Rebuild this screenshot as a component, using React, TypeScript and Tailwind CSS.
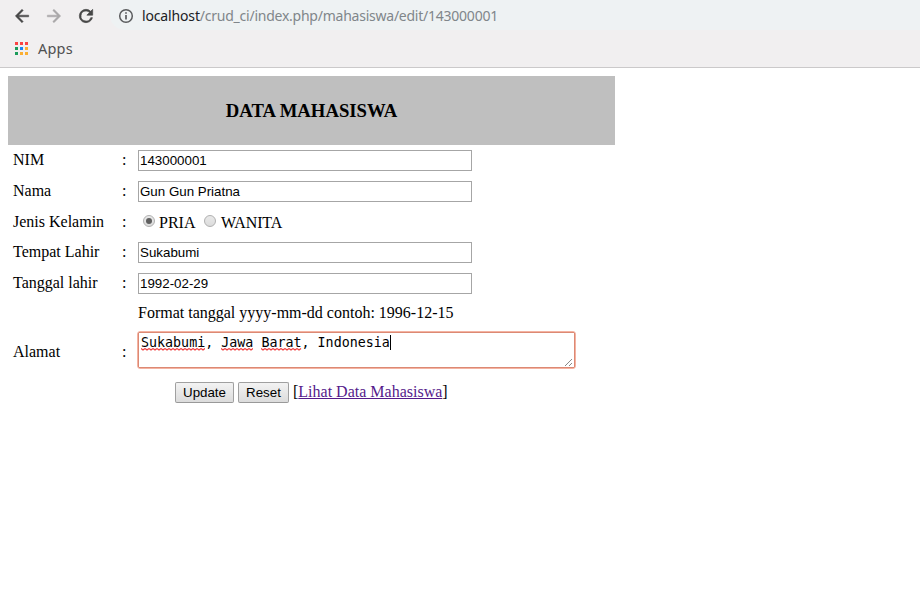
import React from "react";

const serif = "font-['Liberation_Serif',serif]";

function Row({ label, height, shift = "", children }: { label?: string; height: string; shift?: string; children: React.ReactNode }) {
  return (
    <div className={`flex items-center ${height}`}>
      <div className={`w-[109px] pl-[5px] leading-[18px] ${shift}`}>{label}</div>
      <div className={`w-[21px] pl-[5px] leading-[18px] ${shift}`}>{label ? ":" : ""}</div>
      {children}
    </div>
  );
}

function TextField({ value }: { value: string }) {
  return (
    <div className="h-[21px] w-[334px] border border-[#a6a6a6] bg-white pl-px pt-[2px] font-['Liberation_Sans',sans-serif] text-[13.333px] leading-[16px]">
      {value}
    </div>
  );
}

function Radio({ checked }: { checked?: boolean }) {
  return (
    <span className="-mt-[2px] flex h-3 w-3 items-center justify-center rounded-full border border-[#b0b0b0] bg-linear-to-b from-[#e9e9e9] to-[#dcdcdc]">
      {checked && <span className="h-1.5 w-1.5 rounded-full bg-[#5f5f5f]" />}
    </span>
  );
}

function Button({ children, width }: { children: string; width: string }) {
  return (
    <div className={`h-[21px] ${width} rounded-[2px] border border-[#a0a0a0] border-b-[#999] bg-linear-to-b from-[#f3f3f3] to-[#dcdcdc] pt-[2px] text-center font-['Liberation_Sans',sans-serif] text-[13.333px] leading-[16px]`}>
      {children}
    </div>
  );
}

function Misspelled({ children }: { children: string }) {
  return (
    <span className="relative inline-block">
      {children}
      <svg className="absolute left-0 top-[13px] h-[3px] w-full" aria-hidden="true">
        <defs>
          <pattern id="wave" width="4" height="3" patternUnits="userSpaceOnUse">
            <path d="M0 .5 L2 2 L4 .5" fill="none" stroke="#f03c3c" strokeWidth="1.2" />
          </pattern>
        </defs>
        <rect width="100%" height="3" fill="url(#wave)" />
      </svg>
    </span>
  );
}

const appColors = [
  "bg-[#fb4343]", "bg-[#fb4343]", "bg-[#fb4343]",
  "bg-[#1c9c5b]", "bg-[#1a85f5]", "bg-[#fbae32]",
  "bg-[#1c9c5b]", "bg-[#fbae32]", "bg-[#fbae32]",
];

export default function App() {
  return (
    <div className="h-[590px] w-[920px] overflow-hidden bg-white text-black">
      <header className="h-[68px] border-b border-[#cbc9ca] bg-[#f1eff0] font-['Noto_Sans',sans-serif]">
        <div className="flex h-[30px]">
          <div className="flex w-[110px] pt-[6px] pl-[12px]">
            <svg width="20" height="20" viewBox="0 0 24 24" fill="#474747" stroke="#474747" strokeWidth=".6"><path d="M20 11H7.83l5.59-5.59L12 4l-8 8 8 8 1.41-1.41L7.83 13H20v-2z" /></svg>
            <svg className="ml-[12px]" width="20" height="20" viewBox="0 0 24 24" fill="#a9a7a8" stroke="#a9a7a8" strokeWidth=".6"><path d="M12 4l-1.41 1.41L16.17 11H4v2h12.17l-5.58 5.59L12 20l8-8z" /></svg>
            <svg className="ml-[12px]" width="20" height="20" viewBox="0 0 24 24" fill="#474747"><path d="M17.65 6.35A7.96 7.96 0 0 0 12 4a8 8 0 1 0 7.73 10h-2.08A6 6 0 1 1 12 6c1.66 0 3.14.69 4.22 1.78L13 11h7V4l-2.35 2.35z" stroke="#474747" strokeWidth=".8" /></svg>
          </div>
          <div className="flex flex-1 rounded-bl-[15px] bg-[#eef2f3] pl-[8px]">
            <svg className="mt-[8px]" width="16" height="16" viewBox="0 0 16 16" fill="none" stroke="#5a5c5e" strokeWidth="1.5"><circle cx="8" cy="8" r="6.3" /><path d="M8 7v4.5M8 4.3v1.5" strokeWidth="1.7" /></svg>
            <div className="ml-[8px] mt-[6px] whitespace-nowrap text-[14px] leading-[20px] tracking-[-0.24px] text-[#80868a]">
              <span className="tracking-[-0.15px] text-[#202124]">localhost</span>/crud_ci/index.php/mahasiswa/edit/143000001
            </div>
          </div>
        </div>
        <div className="flex pl-[15px]">
          <div className="mt-[12px] grid h-[13px] w-[13px] grid-cols-[3px_3px_3px] grid-rows-[3px_3px_3px] gap-[2px]">
            {appColors.map((color, i) => <span key={i} className={`h-[3px] w-[3px] ${color}`} />)}
          </div>
          <span className="ml-[10px] mt-[8px] text-[14.5px] leading-[20px] tracking-[0.2px] text-[#505050]">Apps</span>
        </div>
      </header>

      <main className={`ml-[8px] mt-[8px] w-[607px] text-[16px] ${serif}`}>
        <h1 className="flex h-[69px] items-center justify-center bg-[#bfbfbf] pt-[2px] text-[18.72px] font-bold">DATA MAHASISWA</h1>
        <Row label="NIM" height="h-[31px]" shift="-mt-[2px]"><TextField value="143000001" /></Row>
        <Row label="Nama" height="h-[31px]" shift="-mt-[2px]"><TextField value="Gun Gun Priatna" /></Row>
        <Row label="Jenis Kelamin" height="h-[30px]">
          <div className="flex items-center pl-[5px] leading-[18px]">
            <Radio checked />
            <span className="ml-[4px] mt-[2px] w-[45px]">PRIA</span>
            <Radio />
            <span className="ml-[5px] mt-[2px] tracking-[-0.1px]">WANITA</span>
          </div>
        </Row>
        <Row label="Tempat Lahir" height="h-[31px]" shift="-mt-[2px]"><TextField value="Sukabumi" /></Row>
        <Row label="Tanggal lahir" height="h-[31px]" shift="-mt-[2px]"><TextField value="1992-02-29" /></Row>
        <Row height="h-[28px]">Format tanggal yyyy-mm-dd contoh: 1996-12-15</Row>
        <Row label="Alamat" height="h-[50px]">
          <div className="-ml-px -mt-[4px] h-[38px] w-[439px] rounded-[3px] border border-[#f4b3a2]">
            <div className="flex h-[36px] justify-between rounded-[1px] border border-[#dc8974] bg-white font-['DejaVu_Sans_Mono',monospace] text-[13.333px] leading-[15px]">
              <div className="flex pl-[2px] pt-[2px]">
                <div className="whitespace-pre"><Misspelled>Sukabumi</Misspelled>, <Misspelled>Jawa</Misspelled>{" "}<Misspelled>Barat</Misspelled>, Indonesia</div>
                <span className="h-[15px] w-px bg-black" />
              </div>
              <svg className="self-end" width="10" height="9" stroke="#555" strokeWidth="1"><path d="M1 8L8 1M5 8L8 5" strokeDasharray="1 .4" /></svg>
            </div>
          </div>
        </Row>
        <div className="flex pl-[167px] pt-[5px]">
          <Button width="w-[59px]">Update</Button>
          <div className="ml-[4px]"><Button width="w-[51px]">Reset</Button></div>
          <div className="ml-[4px] leading-[20px]">[<a className="text-[#551a8b] underline">Lihat Data Mahasiswa</a>]</div>
        </div>
      </main>
    </div>
  );
}
